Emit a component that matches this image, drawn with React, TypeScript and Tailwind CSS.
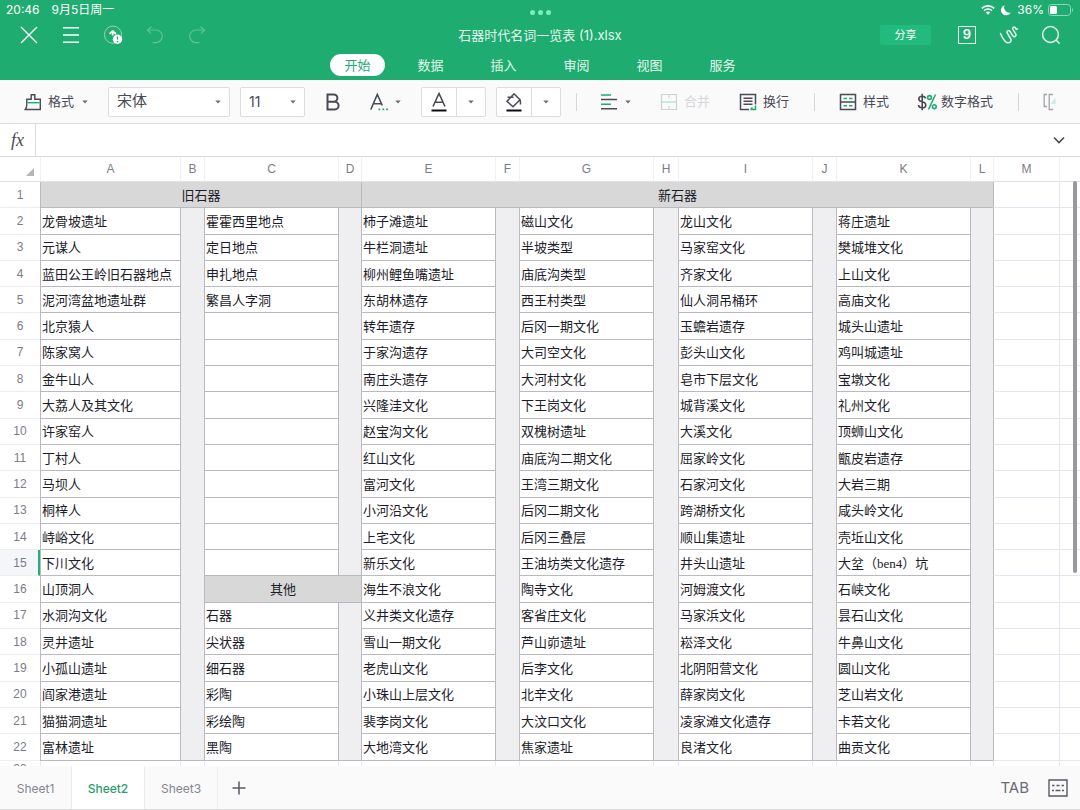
import React, { useState } from 'react';

const MENU_TABS = ['开始', '数据', '插入', '审阅', '视图', '服务'];
const SHEETS = ['Sheet1', 'Sheet2', 'Sheet3'];
const COLUMNS = ['A', 'B', 'C', 'D', 'E', 'F', 'G', 'H', 'I', 'J', 'K', 'L', 'M', ''];

// A, C, E, G, I, K for rows 2 to 22
const ROWS: string[][] = [
  ['龙骨坡遗址', '霍霍西里地点', '柿子滩遗址', '磁山文化', '龙山文化', '蒋庄遗址'],
  ['元谋人', '定日地点', '牛栏洞遗址', '半坡类型', '马家窑文化', '樊城堆文化'],
  ['蓝田公王岭旧石器地点', '申扎地点', '柳州鲤鱼嘴遗址', '庙底沟类型', '齐家文化', '上山文化'],
  ['泥河湾盆地遗址群', '繁昌人字洞', '东胡林遗存', '西王村类型', '仙人洞吊桶环', '高庙文化'],
  ['北京猿人', '', '转年遗存', '后冈一期文化', '玉蟾岩遗存', '城头山遗址'],
  ['陈家窝人', '', '于家沟遗存', '大司空文化', '彭头山文化', '鸡叫城遗址'],
  ['金牛山人', '', '南庄头遗存', '大河村文化', '皂市下层文化', '宝墩文化'],
  ['大荔人及其文化', '', '兴隆洼文化', '下王岗文化', '城背溪文化', '礼州文化'],
  ['许家窑人', '', '赵宝沟文化', '双槐树遗址', '大溪文化', '顶蛳山文化'],
  ['丁村人', '', '红山文化', '庙底沟二期文化', '屈家岭文化', '甑皮岩遗存'],
  ['马坝人', '', '富河文化', '王湾三期文化', '石家河文化', '大岩三期'],
  ['桐梓人', '', '小河沿文化', '后冈二期文化', '跨湖桥文化', '咸头岭文化'],
  ['峙峪文化', '', '上宅文化', '后冈三叠层', '顺山集遗址', '壳坵山文化'],
  ['下川文化', '', '新乐文化', '王油坊类文化遗存', '井头山遗址', '大坌（ben4）坑'],
  ['山顶洞人', '其他', '海生不浪文化', '陶寺文化', '河姆渡文化', '石峡文化'],
  ['水洞沟文化', '石器', '义井类文化遗存', '客省庄文化', '马家浜文化', '昙石山文化'],
  ['灵井遗址', '尖状器', '雪山一期文化', '芦山峁遗址', '崧泽文化', '牛鼻山文化'],
  ['小孤山遗址', '细石器', '老虎山文化', '后李文化', '北阴阳营文化', '圆山文化'],
  ['阎家港遗址', '彩陶', '小珠山上层文化', '北辛文化', '薛家岗文化', '芝山岩文化'],
  ['猫猫洞遗址', '彩绘陶', '裴李岗文化', '大汶口文化', '凌家滩文化遗存', '卡若文化'],
  ['富林遗址', '黑陶', '大地湾文化', '焦家遗址', '良渚文化', '曲贡文化'],
];

const SUBHEADER_ROW = 16;
const ACTIVE_ROW = 15;

function Caret({ className = '' }: { className?: string }) {
  return (
    <svg viewBox="0 0 6 4" className={`h-1 w-1.5 shrink-0 ${className}`} aria-hidden="true">
      <path d="M0.3 0.4h5.4L3 3.4z" fill="#6a6a75" />
    </svg>
  );
}

function StatusBar() {
  return (
    <div className="grid h-5 grid-cols-3 items-center px-1.5 text-xs text-white">
      <div className="flex gap-3">
        <span>20:46</span>
        <span>9月5日周一</span>
      </div>
      <div className="flex justify-center gap-[3px] pt-1">
        <span className="h-[5px] w-[5px] rounded-full bg-[#7df0b9]" />
        <span className="h-[5px] w-[5px] rounded-full bg-[#7df0b9]" />
        <span className="h-[5px] w-[5px] rounded-full bg-[#7df0b9]" />
      </div>
      <div className="flex items-center justify-end gap-1">
        <svg viewBox="0 0 14 10" className="h-2.5 w-3.5" fill="white" aria-hidden="true">
          <path d="M7 9.8 4.9 7.6a3 3 0 0 1 4.2 0z" />
          <path d="M3 5.7a5.7 5.7 0 0 1 8 0" fill="none" stroke="white" strokeWidth="1.5" />
          <path d="M0.8 3.4a8.8 8.8 0 0 1 12.4 0" fill="none" stroke="white" strokeWidth="1.6" />
        </svg>
        <svg viewBox="0 0 12 12" className="mx-px h-3 w-3" fill="white" aria-hidden="true">
          <path d="M4.6 1.2a5.200 5.200 0 1 0 6.200 7.300A5.300 5.300 0 0 1 4.600 1.200z" />
        </svg>
        <span>36%</span>
        <svg viewBox="0 0 26 12" className="h-3 w-[26px]" aria-hidden="true">
          <rect x="0.5" y="0.5" width="22" height="11" rx="3" fill="none" stroke="#8fd6b8" />
          <rect x="2" y="2" width="7" height="8" rx="1.5" fill="white" />
          <path d="M24 4v4c1.4-.6 1.4-3.400 0-4z" fill="#8fd6b8" />
        </svg>
      </div>
    </div>
  );
}

function TitleBar() {
  const iconButton = 'flex h-[30px] w-[42px] items-center justify-center';
  return (
    <div className="grid h-[30px] grid-cols-[1fr_auto_1fr] items-center px-2">
      <div className="flex">
        <button aria-label="关闭" className={iconButton}>
          <svg viewBox="0 0 18 18" className="h-[18px] w-[18px]" fill="none" stroke="white" strokeWidth="1.4">
            <path d="M1 1l16 16M17 1 1 17" />
          </svg>
        </button>
        <button aria-label="菜单" className={iconButton}>
          <svg viewBox="0 0 18 18" className="h-[18px] w-[18px]" fill="none" stroke="white" strokeWidth="1.4">
            <path d="M1 1.700h16M1 9h16M1 16.300h16" />
          </svg>
        </button>
        <button aria-label="上传" className={iconButton}>
          <svg viewBox="0 0 20 20" className="h-5 w-5" fill="none" aria-hidden="true">
            <circle cx="10" cy="9.700" r="8.600" stroke="#8fd6b8" strokeWidth="1" />
            <path
              d="M6.500 8.800C8 7.800 8.800 6.200 9.700 6.200s1.700 1.600 3.200 2.600M9.700 6.800v3.700"
              stroke="white"
              strokeWidth="1.800"
            />
            <circle cx="14.500" cy="14.200" r="4.700" fill="white" />
            <path d="M14.500 11.400v3.200" stroke="#1fac70" strokeWidth="1.300" />
            <circle cx="14.500" cy="16.500" r="0.800" fill="#1fac70" />
          </svg>
        </button>
        <button aria-label="撤销" className={iconButton}>
          <svg viewBox="0 0 18 18" className="h-[18px] w-[18px]" fill="none" stroke="#5bc597" strokeWidth="1.200">
            <path d="M5.500 0.800 1.500 4l3.300 3.600M1.500 4H10a6.300 6.300 0 0 1 0 12.600H6.500" />
          </svg>
        </button>
        <button aria-label="重做" className={iconButton}>
          <svg viewBox="0 0 18 18" className="h-[18px] w-[18px]" fill="none" stroke="#5bc597" strokeWidth="1.200">
            <path d="M12.500 0.800 16.500 4l-3.300 3.600M16.500 4H8a6.300 6.300 0 0 0 0 12.600h3.500" />
          </svg>
        </button>
      </div>
      <h1 className="pt-0.5 text-[13px] text-[#e4f8ee]">石器时代名词一览表 (1).xlsx</h1>
      <div className="flex items-center justify-end">
        <button className="mr-[15px] h-5 w-[51px] rounded-xs bg-[#23bb7d] text-[11px] text-white">分享</button>
        <button aria-label="窗口" className={iconButton}>
          <span className="flex h-[18px] w-[18px] items-center justify-center border border-[#e4f8ee] text-[13px] font-semibold text-white">
            9
          </span>
        </button>
        <button aria-label="画笔" className={iconButton}>
          <svg
            viewBox="0 0 20 20"
            className="h-5 w-5"
            fill="none"
            stroke="#e4f8ee"
            strokeWidth="1.500"
            strokeLinecap="round"
            strokeLinejoin="round"
          >
            <path d="M1.500 8.500c1.500 3.500 4.200 8.500 7 9.200 2.600.5 4.200-1.500 3.300-3.700L8.300 8.200C7.300 6 9.300 4.600 10.800 6.200l3 4.600c1.300 1.700 3.700.6 3.100-1.500l-3-5c-.7-1.800.8-2.900 2.200-1.900l1.100 2.100 1.300-.7" />
          </svg>
        </button>
        <button aria-label="查找" className={iconButton}>
          <svg viewBox="0 0 20 20" className="h-5 w-5" fill="none" stroke="#e4f8ee" strokeWidth="1.500">
            <circle cx="9.500" cy="9.500" r="7.900" />
            <path d="M15 15l3.600 3.600" />
          </svg>
        </button>
      </div>
    </div>
  );
}

function MenuTabs() {
  const [active, setActive] = useState('开始');
  return (
    <nav className="flex h-[30px] items-center justify-center gap-[18px]">
      {MENU_TABS.map((tab) => (
        <button
          key={tab}
          onClick={() => setActive(tab)}
          className={`h-[22px] w-[55px] rounded-full pt-px text-[13px] ${
            tab === active ? 'bg-white text-[#1fac70]' : 'text-[#e4f8ee]'
          }`}
        >
          {tab}
        </button>
      ))}
    </nav>
  );
}

function Divider() {
  return <span className="h-[18px] w-px shrink-0 bg-[#d6d6dc]" />;
}

function Toolbar() {
  const box = 'h-[30px] rounded-xs border border-[#dcdce2] bg-white';
  const split = `flex w-[65px] shrink-0 ${box}`;
  return (
    <div className="flex h-11 items-center overflow-hidden border-b border-[#dcdcde] bg-[#fafafb] pl-6 text-[13px] text-[#4a4a55]">
      <button className="flex shrink-0 items-center">
        <svg viewBox="0 0 18 18" className="mr-1.5 h-[18px] w-[18px]" fill="none" stroke="#4a4a55" strokeWidth="1.400">
          <path d="M2.800 8.500V6.200h4.400V1.700h3.600v4.500h5.500v10.300H1.300c1-1.200 1.500-3 1.500-5V8.500" />
          <path d="M3.500 9.700h12" stroke="#1fac70" />
        </svg>
        格式
        <Caret className="ml-2" />
      </button>

      <div className="relative ml-5 shrink-0">
        <select aria-label="字体" className={`w-[122px] appearance-none pl-2 text-[15px] ${box}`}>
          <option>宋体</option>
        </select>
        <Caret className="pointer-events-none absolute top-[13px] right-[9px]" />
      </div>
      <div className="relative ml-2.5 shrink-0">
        <select aria-label="字号" className={`w-[65px] appearance-none pl-2 text-sm ${box}`}>
          <option>11</option>
        </select>
        <Caret className="pointer-events-none absolute top-[13px] right-[9px]" />
      </div>

      <button aria-label="加粗" className="ml-5 shrink-0">
        <svg viewBox="0 0 16 18" className="h-[18px] w-4" fill="none" stroke="#4a4a55" strokeWidth="2">
          <path d="M2.500 1.500h6.300a3.600 3.600 0 0 1 0 7.200H2.500zM2.500 8.700h7.200a3.900 3.900 0 0 1 0 7.800H2.500z" />
        </svg>
      </button>
      <button aria-label="字体格式" className="ml-[29px] flex shrink-0 items-center">
        <svg viewBox="0 0 18 18" className="h-[18px] w-[18px]" fill="none" stroke="#4a4a55" strokeWidth="1.600">
          <path d="M0.800 16.500 7.300 1.500l5 11M3.400 10.700h7.600" />
          <path d="M8.500 16.300h1.800M12.400 16.300h1.800M16.200 16.300H18" stroke="#1fac70" strokeWidth="1.800" />
        </svg>
        <Caret className="ml-[7px]" />
      </button>

      <div className={`ml-5 ${split}`}>
        <button aria-label="字体颜色" className="flex flex-1 items-center justify-center border-r border-[#dcdce2]">
          <svg viewBox="0 0 16 20" className="h-5 w-4" fill="none" stroke="#4a4a55" strokeWidth="1.600">
            <path d="M2 14.500 8 1.500l6 13M4.300 10.200h7.400" />
            <path d="M0.500 18.500h15" stroke="#0b0b10" strokeWidth="2" />
          </svg>
        </button>
        <button aria-label="更多字体颜色" className="flex w-7 items-center justify-center">
          <Caret />
        </button>
      </div>
      <div className={`ml-2.5 ${split}`}>
        <button aria-label="填充颜色" className="flex flex-1 items-center justify-center border-r border-[#dcdce2]">
          <svg viewBox="0 0 16 20" className="h-5 w-4" fill="none" stroke="#4a4a55" strokeWidth="1.500">
            <path d="M1.500 5.300h6M1 9.300 8 1.800l6 6-7 7zM13.500 7.300c1 1.300 1.200 3 .9 5.200" />
            <path d="M0.500 18.500h15" stroke="#0b0b10" strokeWidth="2" />
          </svg>
        </button>
        <button aria-label="更多填充颜色" className="flex w-7 items-center justify-center">
          <Caret />
        </button>
      </div>

      <div className="ml-[15px] flex shrink-0">
        <Divider />
      </div>
      <button aria-label="对齐" className="ml-[23px] flex shrink-0 items-center">
        <svg viewBox="0 0 18 18" className="h-[18px] w-[18px]" fill="none" stroke="#4a4a55" strokeWidth="1.500">
          <path d="M1 6.500h16M1 15.800h16" />
          <path d="M1 2h10M1 11.200h10" stroke="#1fac70" />
        </svg>
        <Caret className="ml-[7px]" />
      </button>
      <button disabled className="ml-[29px] flex shrink-0 items-center text-[#d6d6dc]">
        <svg viewBox="0 0 18 18" className="mr-1.5 h-[18px] w-[18px]" fill="none" stroke="#d0d0d8" strokeWidth="1.200">
          <path d="M1.500 1.500h15v15h-15zM9 1.500V5M9 13v3.500" />
          <path d="M1.500 9h15" stroke="#a8dfc8" />
        </svg>
        合并
      </button>
      <button className="ml-[29px] flex shrink-0 items-center">
        <svg viewBox="0 0 18 18" className="mr-1.5 h-[18px] w-[18px]" fill="none" stroke="#4a4a55" strokeWidth="1.500">
          <path d="M10 16.500H1.500v-15h15v10" />
          <path d="M4.500 5.200h9M4.500 8.300h9M4.500 11.300h9" />
          <path d="M16.500 12.500v4H12M13.500 14.500l-2 2" stroke="#1fac70" />
        </svg>
        换行
      </button>
      <div className="ml-[25px] flex shrink-0">
        <Divider />
      </div>
      <button className="ml-6 flex shrink-0 items-center">
        <svg viewBox="0 0 18 18" className="mr-1.5 h-[18px] w-[18px]" fill="none" stroke="#4a4a55" strokeWidth="1.500">
          <path d="M1.500 1.500h15v15h-15zM1.500 9h15" />
          <path d="M4.500 5.400H8M10 5.400h3.500M4.500 12.700H8M10 12.700h3.500" stroke="#1fac70" />
        </svg>
        样式
      </button>
      <button className="ml-7 flex shrink-0 items-center">
        <svg viewBox="0 0 20 18" className="mr-1 h-[18px] w-5" fill="none" stroke="#4a4a55" strokeWidth="1.600">
          <path d="M8.500 5.500C8.300 3.900 7 3.200 5.200 3.200 3.300 3.200 1.800 4.100 1.800 5.900c0 3.800 7 2 7 6 0 1.900-1.600 2.900-3.600 2.900-2.100 0-3.600-.9-3.700-2.800M5.200 0.800v16.400" />
          <path d="M18.500 1.500l-7 15" stroke="#1fac70" />
          <circle cx="12.500" cy="4.500" r="1.900" stroke="#1fac70" />
          <circle cx="17.300" cy="13.700" r="1.900" stroke="#1fac70" />
        </svg>
        数字格式
      </button>
      <div className="ml-[25px] flex shrink-0">
        <Divider />
      </div>
      <button aria-label="更多" className="ml-6 shrink-0 opacity-60">
        <svg viewBox="0 0 14 18" className="h-[18px] w-3.5" fill="none" stroke="#6a6a75" strokeWidth="1.300">
          <path d="M4 1.500H1.200v12H4M10 1.500H6.200v15h4" />
          <path d="M9 10l3-3.500V10z" stroke="#a8dfc8" />
        </svg>
      </button>
    </div>
  );
}

function FormulaBar() {
  return (
    <div className="flex h-[33px] items-center border-b border-[#dcdcde] bg-white">
      <label
        htmlFor="formula"
        className="flex h-full w-9 items-center justify-center border-r border-[#dcdcde] font-['Liberation_Serif',serif] text-lg text-[#4a4a55] italic"
      >
        fx
      </label>
      <input id="formula" className="h-full min-w-0 flex-1 px-2 text-[13px] outline-none" />
      <button aria-label="展开" className="flex h-full w-[42px] items-center justify-center">
        <svg viewBox="0 0 12 8" className="h-2 w-3" fill="none" stroke="#4a4a55" strokeWidth="1.600">
          <path d="M1 1.500l5 5 5-5" />
        </svg>
      </button>
    </div>
  );
}

function DataCell({ children }: { children?: React.ReactNode }) {
  return <td className="border-b border-l border-[#b9b9bf] bg-white pt-0.5 pl-px">{children}</td>;
}

function BandCell({ rowSpan }: { rowSpan: number }) {
  return <td rowSpan={rowSpan} className="border-b border-l border-[#b9b9bf] bg-[#efeff2]" />;
}

function RowHeader({ n }: { n: number }) {
  const active = n === ACTIVE_ROW;
  return (
    <th
      scope="row"
      className={`border-b border-[#eeeef2] font-['Liberation_Sans',sans-serif] text-xs leading-4 font-normal text-[#7c7c86] ${
        active ? 'border-r-2 border-r-[#22b07a] bg-[#f4f6fa] pl-0.5' : ''
      }`}
    >
      {n}
    </th>
  );
}

function OuterCells() {
  return (
    <>
      <td className="border-b border-l border-[#e6e6f0] border-l-[#b9b9bf]" />
      <td className="border-b border-l border-[#e6e6f0]" />
    </>
  );
}

function SheetGrid() {
  return (
    <main className="relative min-h-0 flex-1 overflow-hidden bg-white">
      <table className="h-[622px] w-full table-fixed border-separate border-spacing-0 font-['Liberation_Serif','Noto_Sans_CJK_SC',sans-serif] text-[13px] leading-5 whitespace-nowrap text-[#1c1c2a]">
        <colgroup>
          <col className="w-10" />
          <col className="w-[140px]" />
          <col className="w-6" />
          <col className="w-[134px]" />
          <col className="w-[23px]" />
          <col className="w-[134px]" />
          <col className="w-6" />
          <col className="w-[134px]" />
          <col className="w-[25px]" />
          <col className="w-[134px]" />
          <col className="w-6" />
          <col className="w-[134px]" />
          <col className="w-[23px]" />
          <col className="w-[66px]" />
          <col />
        </colgroup>
        <thead>
          <tr className="h-[25px] font-['Liberation_Sans',sans-serif] text-xs text-[#7c7c86]">
            <th className="border-b border-[#e0e0e6] px-1.5">
              <svg viewBox="0 0 8 8" className="mt-1.5 ml-auto h-2 w-2" aria-hidden="true">
                <path d="M8 0v8H0z" fill="#b4b4ba" />
              </svg>
            </th>
            {COLUMNS.map((name, i) => (
              <th key={i} scope="col" className="border-b border-l border-[#e0e0e6] border-l-[#f0f0f4] font-normal">
                {name}
              </th>
            ))}
          </tr>
        </thead>
        <tbody>
          <tr className="h-[26px]">
            <RowHeader n={1} />
            <td colSpan={4} className="border-b border-l border-[#b9b9bf] bg-[#d8d8d8] pt-0.5 text-center">
              旧石器
            </td>
            <td colSpan={8} className="border-b border-l border-[#b9b9bf] bg-[#d8d8d8] pt-0.5 text-center">
              新石器
            </td>
            <OuterCells />
          </tr>
          {ROWS.map(([a, c, e, g, i, k], index) => {
            const n = index + 2;
            const first = n === 2;
            return (
              <tr key={n} className="h-[26px]">
                <RowHeader n={n} />
                <DataCell>{a}</DataCell>
                {first && <BandCell rowSpan={21} />}
                {n === SUBHEADER_ROW ? (
                  <td colSpan={2} className="border-b border-l border-[#b9b9bf] bg-[#d8d8d8] pt-0.5 text-center">
                    {c}
                  </td>
                ) : (
                  <DataCell>{c}</DataCell>
                )}
                {first && <BandCell rowSpan={14} />}
                {n === SUBHEADER_ROW + 1 && <BandCell rowSpan={6} />}
                <DataCell>{e}</DataCell>
                {first && <BandCell rowSpan={21} />}
                <DataCell>{g}</DataCell>
                {first && <BandCell rowSpan={21} />}
                <DataCell>{i}</DataCell>
                {first && <BandCell rowSpan={21} />}
                <DataCell>{k}</DataCell>
                {first && <BandCell rowSpan={21} />}
                <OuterCells />
              </tr>
            );
          })}
          <tr className="h-[18px]">
            <RowHeader n={23} />
            {COLUMNS.map((_, i) => (
              <td key={i} className="border-l border-[#e6e6f0]" />
            ))}
          </tr>
        </tbody>
      </table>
      {/* Scroll thumb */}
      <div className="absolute top-6 right-[3px] h-[392px] w-1 rounded-full bg-[#98989e]" />
    </main>
  );
}

function SheetTabs() {
  const [active, setActive] = useState('Sheet2');
  return (
    <footer className="flex h-11 items-stretch border-b border-[#dcdcde] bg-[#fafafb] text-xs text-[#85858e]">
      {SHEETS.map((sheet) => (
        <button
          key={sheet}
          onClick={() => setActive(sheet)}
          className={`w-[73px] border-r border-[#ececf0] pt-0.5 first:w-[72px] ${
            sheet === active ? 'bg-white font-medium text-[#2a9d6c]' : ''
          }`}
        >
          {sheet}
        </button>
      ))}
      <button aria-label="新建工作表" className="flex w-[42px] items-center justify-center">
        <svg viewBox="0 0 14 14" className="h-3.5 w-3.5" stroke="#5a5a66" strokeWidth="1.500">
          <path d="M7 0.500v13M0.500 7h13" />
        </svg>
      </button>
      <button className="ml-auto px-[19px] text-[15px] text-[#6a6a75]">TAB</button>
      <button aria-label="键盘" className="mr-3">
        <svg viewBox="0 0 20 18" className="h-[18px] w-5" fill="none" stroke="#5a5a66" strokeWidth="1.400">
          <path d="M1 1h18v16H1z" />
          <path d="M4 6.500h2.500M8.500 6.500h3M13.500 6.500H16M4 11.500h2M7.500 11.500h5M14 11.500h2" />
        </svg>
      </button>
    </footer>
  );
}

export default function App() {
  return (
    <div className="flex h-screen flex-col overflow-hidden bg-white font-['Inter','Noto_Sans_CJK_SC',sans-serif]">
      <header className="bg-[#1fac70]">
        <StatusBar />
        <TitleBar />
        <MenuTabs />
      </header>
      <Toolbar />
      <FormulaBar />
      <SheetGrid />
      <SheetTabs />
    </div>
  );
}
